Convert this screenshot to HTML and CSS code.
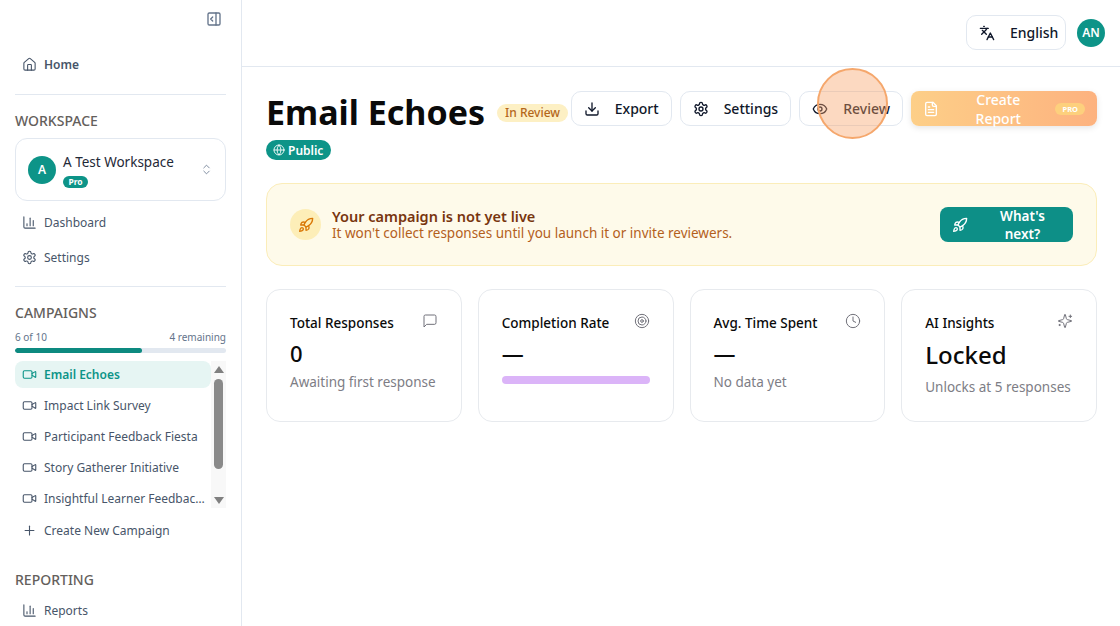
FILE: index.html
```html
<!DOCTYPE html>
<html lang="en">
<head>
    <meta charset="UTF-8">
    <meta name="viewport" content="width=device-width, initial-scale=1.0">
    <title>Email Echoes</title>
    <link rel="stylesheet" href="styles.css">
</head>
<body>

<svg class="icon-defs" aria-hidden="true">
    <symbol id="i-panel" viewBox="0 0 24 24"><rect width="18" height="18" x="3" y="3" rx="2"/><path d="M15 3v18"/><path d="m10 15-3-3 3-3"/></symbol>
    <symbol id="i-home" viewBox="0 0 24 24"><path d="M15 21v-8a1 1 0 0 0-1-1h-4a1 1 0 0 0-1 1v8"/><path d="M3 10a2 2 0 0 1 .709-1.528l7-5.999a2 2 0 0 1 2.582 0l7 5.999A2 2 0 0 1 21 10v9a2 2 0 0 1-2 2H5a2 2 0 0 1-2-2z"/></symbol>
    <symbol id="i-chart" viewBox="0 0 24 24"><path d="M3 3v16a2 2 0 0 0 2 2h16"/><path d="M18 17V9"/><path d="M13 17V5"/><path d="M8 17v-3"/></symbol>
    <symbol id="i-gear" viewBox="0 0 24 24"><path d="M12.22 2h-.44a2 2 0 0 0-2 2v.18a2 2 0 0 1-1 1.73l-.43.25a2 2 0 0 1-2 0l-.15-.08a2 2 0 0 0-2.73.73l-.22.38a2 2 0 0 0 .73 2.73l.15.1a2 2 0 0 1 1 1.72v.51a2 2 0 0 1-1 1.74l-.15.09a2 2 0 0 0-.73 2.73l.22.38a2 2 0 0 0 2.73.73l.15-.08a2 2 0 0 1 2 0l.43.25a2 2 0 0 1 1 1.73V20a2 2 0 0 0 2 2h.44a2 2 0 0 0 2-2v-.18a2 2 0 0 1 1-1.73l.43-.25a2 2 0 0 1 2 0l.15.08a2 2 0 0 0 2.73-.73l.22-.39a2 2 0 0 0-.73-2.73l-.15-.08a2 2 0 0 1-1-1.74v-.5a2 2 0 0 1 1-1.74l.15-.09a2 2 0 0 0 .73-2.73l-.22-.38a2 2 0 0 0-2.73-.73l-.15.08a2 2 0 0 1-2 0l-.43-.25a2 2 0 0 1-1-1.73V4a2 2 0 0 0-2-2z"/><circle cx="12" cy="12" r="3"/></symbol>
    <symbol id="i-video" viewBox="0 0 24 24"><path d="m16 13 5.223 3.482a.5.5 0 0 0 .777-.416V7.87a.5.5 0 0 0-.752-.432L16 10.5"/><rect x="2" y="6" width="14" height="12" rx="2"/></symbol>
    <symbol id="i-updown" viewBox="0 0 24 24"><path d="m7 15 5 5 5-5"/><path d="m7 9 5-5 5 5"/></symbol>
    <symbol id="i-plus" viewBox="0 0 24 24"><path d="M5 12h14"/><path d="M12 5v14"/></symbol>
    <symbol id="i-download" viewBox="0 0 24 24"><path d="M21 15v4a2 2 0 0 1-2 2H5a2 2 0 0 1-2-2v-4"/><polyline points="7 10 12 15 17 10"/><line x1="12" x2="12" y1="15" y2="3"/></symbol>
    <symbol id="i-eye" viewBox="0 0 24 24"><path d="M2.062 12.348a1 1 0 0 1 0-.696 10.75 10.75 0 0 1 19.876 0 1 1 0 0 1 0 .696 10.75 10.75 0 0 1-19.876 0"/><circle cx="12" cy="12" r="3"/></symbol>
    <symbol id="i-file" viewBox="0 0 24 24"><path d="M15 2H6a2 2 0 0 0-2 2v16a2 2 0 0 0 2 2h12a2 2 0 0 0 2-2V7Z"/><path d="M14 2v4a2 2 0 0 0 2 2h4"/><path d="M10 9H8"/><path d="M16 13H8"/><path d="M16 17H8"/></symbol>
    <symbol id="i-lang" viewBox="0 0 24 24"><path d="m5 8 6 6"/><path d="m4 14 6-6 2-3"/><path d="M2 5h12"/><path d="M7 2h1"/><path d="m22 22-5-10-5 10"/><path d="M14 18h6"/></symbol>
    <symbol id="i-globe" viewBox="0 0 24 24"><circle cx="12" cy="12" r="10"/><path d="M12 2a14.5 14.5 0 0 0 0 20 14.5 14.5 0 0 0 0-20"/><path d="M2 12h20"/></symbol>
    <symbol id="i-rocket" viewBox="0 0 24 24"><path d="M4.5 16.5c-1.5 1.26-2 5-2 5s3.74-.5 5-2c.71-.84.7-2.13-.09-2.91a2.18 2.18 0 0 0-2.91-.09z"/><path d="m12 15-3-3a22 22 0 0 1 2-3.95A12.88 12.88 0 0 1 22 2c0 2.72-.78 7.5-6 11a22.35 22.35 0 0 1-4 2z"/><path d="M9 12H4s.55-3.03 2-4c1.62-1.08 5 0 5 0"/><path d="M12 15v5s3.03-.55 4-2c1.08-1.62 0-5 0-5"/></symbol>
    <symbol id="i-message" viewBox="0 0 24 24"><path d="M21 15a2 2 0 0 1-2 2H7l-4 4V5a2 2 0 0 1 2-2h14a2 2 0 0 1 2 2z"/></symbol>
    <symbol id="i-target" viewBox="0 0 24 24"><circle cx="12" cy="12" r="10"/><circle cx="12" cy="12" r="6"/><circle cx="12" cy="12" r="2"/></symbol>
    <symbol id="i-clock" viewBox="0 0 24 24"><circle cx="12" cy="12" r="10"/><polyline points="12 6 12 12 16 14"/></symbol>
    <symbol id="i-sparkles" viewBox="0 0 24 24"><path d="M9.937 15.5A2 2 0 0 0 8.5 14.063l-6.135-1.582a.5.5 0 0 1 0-.962L8.5 9.936A2 2 0 0 0 9.937 8.5l1.582-6.135a.5.5 0 0 1 .963 0L14.063 8.5A2 2 0 0 0 15.5 9.937l6.135 1.581a.5.5 0 0 1 0 .964L15.5 14.063a2 2 0 0 0-1.437 1.437l-1.582 6.135a.5.5 0 0 1-.963 0z"/><path d="M20 3v4"/><path d="M22 5h-4"/><path d="M4 17v2"/><path d="M5 18H3"/></symbol>
</svg>

<div class="app">
    <aside class="sidebar">
        <div class="collapse-row">
            <svg class="icon collapse-icon"><use href="#i-panel"/></svg>
        </div>

        <a class="nav-item nav-home"><svg class="icon"><use href="#i-home"/></svg><span>Home</span></a>
        <hr class="divider divider-home">

        <h3 class="section-title">WORKSPACE</h3>
        <div class="workspace-card">
            <div class="workspace-avatar">A</div>
            <div class="workspace-info">
                <div class="workspace-name">A Test Workspace</div>
                <span class="pro-pill">Pro</span>
            </div>
            <svg class="icon updown-icon"><use href="#i-updown"/></svg>
        </div>
        <div class="workspace-links">
            <a class="nav-item"><svg class="icon"><use href="#i-chart"/></svg><span>Dashboard</span></a>
            <a class="nav-item"><svg class="icon"><use href="#i-gear"/></svg><span>Settings</span></a>
        </div>
        <hr class="divider divider-workspace">

        <h3 class="section-title">CAMPAIGNS</h3>
        <div class="usage-row"><span>6 of 10</span><span>4 remaining</span></div>
        <div class="usage-track"><div class="usage-fill" style="width: 60%"></div></div>

        <div class="campaign-scroll">
            <ul class="campaign-list">
                <li class="nav-item campaign-item active"><svg class="icon"><use href="#i-video"/></svg><span>Email Echoes</span></li>
                <li class="nav-item campaign-item"><svg class="icon"><use href="#i-video"/></svg><span>Impact Link Survey</span></li>
                <li class="nav-item campaign-item"><svg class="icon"><use href="#i-video"/></svg><span>Participant Feedback Fiesta</span></li>
                <li class="nav-item campaign-item"><svg class="icon"><use href="#i-video"/></svg><span>Story Gatherer Initiative</span></li>
                <li class="nav-item campaign-item"><svg class="icon"><use href="#i-video"/></svg><span class="truncate">Insightful Learner Feedback Loop</span></li>
            </ul>
            <div class="scrollbar">
                <div class="arrow-up"></div>
                <div class="scroll-thumb"></div>
                <div class="arrow-down"></div>
            </div>
        </div>
        <a class="nav-item campaign-item create-item"><svg class="icon"><use href="#i-plus"/></svg><span>Create New Campaign</span></a>

        <h3 class="section-title reporting-title">REPORTING</h3>
        <a class="nav-item campaign-item"><svg class="icon"><use href="#i-chart"/></svg><span>Reports</span></a>
    </aside>

    <div class="main">
        <header class="topbar">
            <button class="btn lang-btn"><svg class="icon btn-icon"><use href="#i-lang"/></svg>English</button>
            <div class="user-avatar">AN</div>
        </header>

        <main class="content">
            <div class="page-head">
                <div class="page-title-wrap">
                    <div class="title-row">
                        <h1>Email Echoes</h1>
                        <span class="status-badge">In Review</span>
                    </div>
                    <span class="public-badge"><svg class="icon"><use href="#i-globe"/></svg>Public</span>
                </div>
                <div class="actions">
                    <button class="btn export-btn"><svg class="icon btn-icon"><use href="#i-download"/></svg>Export</button>
                    <button class="btn settings-btn"><svg class="icon btn-icon"><use href="#i-gear"/></svg>Settings</button>
                    <button class="btn review-btn"><svg class="icon btn-icon"><use href="#i-eye"/></svg>Review</button>
                    <button class="btn report-btn"><svg class="icon btn-icon"><use href="#i-file"/></svg>Create Report<span class="report-pro">PRO</span></button>
                </div>
            </div>

            <section class="notice">
                <div class="notice-icon"><svg class="icon"><use href="#i-rocket"/></svg></div>
                <div class="notice-text">
                    <div class="notice-title">Your campaign is not yet live</div>
                    <div class="notice-sub">It won't collect responses until you launch it or invite reviewers.</div>
                </div>
                <button class="next-btn"><svg class="icon"><use href="#i-rocket"/></svg>What's next?</button>
            </section>

            <section class="stats">
                <div class="stat-card">
                    <div class="stat-head"><span>Total Responses</span><svg class="icon"><use href="#i-message"/></svg></div>
                    <div class="stat-value">0</div>
                    <div class="stat-note">Awaiting first response</div>
                </div>
                <div class="stat-card">
                    <div class="stat-head"><span>Completion Rate</span><svg class="icon"><use href="#i-target"/></svg></div>
                    <div class="stat-value">—</div>
                    <div class="stat-bar"></div>
                </div>
                <div class="stat-card">
                    <div class="stat-head"><span>Avg. Time Spent</span><svg class="icon"><use href="#i-clock"/></svg></div>
                    <div class="stat-value">—</div>
                    <div class="stat-note">No data yet</div>
                </div>
                <div class="stat-card">
                    <div class="stat-head"><span>AI Insights</span><svg class="icon"><use href="#i-sparkles"/></svg></div>
                    <div class="stat-value stat-locked">Locked</div>
                    <div class="stat-note">Unlocks at 5 responses</div>
                </div>
            </section>
        </main>
    </div>
</div>

<div class="click-highlight"></div>

</body>
</html>
```

FILE: styles.css
```css
* {
    box-sizing: border-box;
}

html, body {
    margin: 0;
    height: 626px;
    overflow: hidden;
}

body {
    font-family: "Noto Sans", "Open Sans", sans-serif;
    background-color: white;
    color: #0a0a0a;
}

.icon-defs {
    display: none;
}

.icon {
    width: 16px;
    height: 16px;
    flex-shrink: 0;
    fill: none;
    stroke: currentColor;
    stroke-width: 2;
    stroke-linecap: round;
    stroke-linejoin: round;
}

.app {
    display: flex;
    height: 626px;
}

/* sidebar */
.sidebar {
    width: 242px;
    flex-shrink: 0;
    padding: 0 15px;
    border-right: 1px solid #e2e8f0;
    overflow: hidden;
}

.collapse-row {
    display: flex;
    justify-content: flex-end;
    height: 47px;
    padding: 11px 4px 0 0;
}

.collapse-icon {
    color: #64748b;
}

.nav-item {
    display: flex;
    align-items: center;
    gap: 7px;
    height: 35px;
    padding-left: 7px;
    font-size: 12px;
    color: #475569;
}

.nav-item .icon {
    width: 15px;
    height: 15px;
    stroke-width: 1.75;
}

.nav-home {
    height: 34px;
    font-weight: 600;
}

.divider {
    border: none;
    border-top: 1px solid #e2e8f0;
    margin: 0;
}

.divider-home {
    margin-top: 13px;
}

.section-title {
    margin: 0;
    font-size: 14px;
    line-height: 20px;
    font-weight: 500;
    color: #64605c;
}

.divider-home + .section-title {
    margin-top: 16px;
}

.workspace-card {
    display: flex;
    align-items: center;
    height: 63px;
    margin-top: 7px;
    padding: 0 12px;
    border: 1px solid #e2e8f0;
    border-radius: 12px;
}

.workspace-avatar, .user-avatar {
    display: flex;
    align-items: center;
    justify-content: center;
    border-radius: 50%;
    background-color: #0d9488;
    color: white;
    font-weight: 600;
}

.workspace-avatar {
    width: 28px;
    height: 28px;
    font-size: 12px;
}

.workspace-info {
    flex: 1;
    margin-left: 7px;
}

.workspace-name {
    font-size: 13.5px;
    line-height: 20px;
    color: #1f2937;
}

.pro-pill {
    display: block;
    width: 25px;
    height: 12px;
    margin-top: 4px;
    border-radius: 6px;
    background-color: #0d9488;
    color: white;
    font-size: 8.5px;
    line-height: 12px;
    font-weight: 700;
    text-align: center;
}

.updown-icon {
    width: 13px;
    height: 13px;
    stroke-width: 1.5;
    color: #64748b;
}

.workspace-links {
    margin-top: 4px;
}

.divider-workspace {
    margin-top: 11px;
}

.divider-workspace + .section-title {
    margin-top: 16px;
}

.usage-row {
    display: flex;
    justify-content: space-between;
    margin-top: 7px;
    font-size: 10px;
    line-height: 14px;
    color: #64748b;
}

.usage-track {
    height: 5px;
    margin-top: 4px;
    border-radius: 3px;
    background-color: #e2e8f0;
    overflow: hidden;
}

.usage-fill {
    height: 100%;
    border-radius: 3px;
    background-color: #0d8a80;
}

.campaign-scroll {
    display: flex;
    height: 147px;
    margin-top: 8px;
}

.campaign-list {
    flex: 1;
    min-width: 0;
    margin: 0;
    padding: 0;
    list-style: none;
}

.campaign-item {
    height: 27px;
    margin-bottom: 4px;
}

.campaign-item .truncate {
    overflow: hidden;
    white-space: nowrap;
    text-overflow: ellipsis;
}

.campaign-item span {
    min-width: 0;
}

.campaign-item.active {
    background-color: #e6f5f3;
    border-radius: 8px;
    color: #0d9488;
    font-weight: 600;
}

.scrollbar {
    display: flex;
    flex-direction: column;
    align-items: center;
    width: 15px;
    flex-shrink: 0;
    background-color: #f8f8f8;
}

.arrow-up, .arrow-down {
    width: 0;
    height: 0;
    border-left: 5px solid transparent;
    border-right: 5px solid transparent;
}

.arrow-up {
    margin-top: 5px;
    border-bottom: 7px solid #808080;
}

.arrow-down {
    margin-top: 28px;
    border-top: 7px solid #808080;
}

.scroll-thumb {
    width: 9px;
    height: 90px;
    margin-top: 6px;
    border-radius: 5px;
    background-color: #8a8a8a;
}

.create-item {
    margin-top: 9px;
    margin-bottom: 0;
}

.reporting-title {
    margin-top: 26px;
    margin-bottom: 7px;
}

/* top bar */
.main {
    flex: 1;
    min-width: 0;
}

.topbar {
    display: flex;
    align-items: center;
    justify-content: flex-end;
    gap: 11px;
    height: 67px;
    padding: 0 15px 1px 0;
    border-bottom: 1px solid #e2e8f0;
}

.btn {
    display: flex;
    align-items: center;
    height: 35px;
    padding: 0 12px;
    border: 1px solid #e2e8f0;
    border-radius: 10px;
    background-color: white;
    color: #0f172a;
    font-family: inherit;
    font-size: 14px;
    font-weight: 500;
}

.btn-icon {
    margin-right: 15px;
}

.lang-btn {
    width: 100px;
}

.user-avatar {
    width: 28px;
    height: 28px;
    font-size: 12px;
}

/* page head */
.content {
    padding: 23px 23px 0 24px;
}

.page-head {
    display: flex;
    justify-content: space-between;
    height: 93px;
}

.title-row {
    display: flex;
    align-items: center;
    gap: 12px;
}

h1 {
    margin: 0;
    font-size: 34px;
    line-height: 44px;
    font-weight: 700;
    color: #0a0a0a;
}

.status-badge {
    margin-top: 2px;
    padding: 0 8px;
    height: 18px;
    border-radius: 9px;
    background-color: #fdf0c4;
    color: #b4671a;
    font-size: 12px;
    line-height: 18px;
    font-weight: 500;
}

.public-badge {
    display: inline-flex;
    align-items: center;
    gap: 3px;
    height: 20px;
    margin-top: 6px;
    padding: 0 8px 0 7px;
    border-radius: 10px;
    background-color: #0d9488;
    color: white;
    font-size: 12px;
    font-weight: 600;
}

.public-badge .icon {
    width: 12px;
    height: 12px;
    stroke-width: 1.75;
}

.actions {
    display: flex;
    gap: 8px;
    height: 35px;
    margin-top: 1px;
}

.report-btn {
    position: relative;
    width: 186px;
    border: none;
    border-radius: 8px;
    background: linear-gradient(90deg, #fdcf88, #fdb27f);
    color: white;
    box-shadow: 0 2px 6px rgba(0, 0, 0, 0.1);
}

.report-pro {
    margin-left: 13px;
    padding: 0 7px;
    height: 12px;
    border-radius: 6px;
    background-color: #fdd07d;
    font-size: 7.5px;
    line-height: 12px;
    font-weight: 700;
}

/* banner */
.notice {
    display: flex;
    align-items: center;
    height: 83px;
    padding: 0 23px;
    border: 1px solid #fbedb9;
    border-radius: 16px;
    background-color: #fefaea;
}

.notice-icon {
    display: flex;
    align-items: center;
    justify-content: center;
    width: 31px;
    height: 31px;
    border-radius: 50%;
    background-color: #fdeeb8;
    color: #d97706;
}

.notice-text {
    flex: 1;
    margin-left: 11px;
}

.notice-title {
    font-size: 14.5px;
    line-height: 18px;
    font-weight: 600;
    color: #78350f;
}

.notice-sub {
    font-size: 13.5px;
    line-height: 17px;
    color: #b45f1c;
}

.next-btn {
    display: flex;
    align-items: center;
    gap: 16px;
    width: 133px;
    height: 35px;
    padding: 0 12px;
    border: none;
    border-radius: 8px;
    background-color: #0d8f87;
    color: white;
    font-family: inherit;
    font-size: 13.5px;
    font-weight: 600;
}

/* stat cards */
.stats {
    display: grid;
    grid-template-columns: repeat(4, 1fr);
    gap: 16px;
    margin-top: 23px;
}

.stat-card {
    height: 133px;
    padding: 23px 23px 0;
    border: 1px solid #e7eaee;
    border-radius: 14px;
}

.stat-head {
    display: flex;
    align-items: flex-start;
    justify-content: space-between;
    font-size: 13.5px;
    line-height: 20px;
    font-weight: 500;
    color: #0a0a0a;
}

.stat-head .icon {
    color: #71717a;
    stroke-width: 1.5;
}

.stat-value {
    margin-top: 4px;
    font-size: 22px;
    line-height: 32px;
    font-weight: 500;
}

.stat-locked {
    font-size: 24px;
    line-height: 36px;
}

.stat-note {
    margin-top: 3px;
    font-size: 13.5px;
    line-height: 20px;
    color: #7d7d85;
}

.stat-locked + .stat-note {
    margin-top: 4px;
}

.stat-bar {
    height: 8px;
    margin-top: 7px;
    border-radius: 4px;
    background-color: #dbb4f8;
}

/* click marker from the recording */
.click-highlight {
    position: absolute;
    left: 817px;
    top: 68px;
    width: 71px;
    height: 71px;
    border: 2px solid #f5a76c;
    border-radius: 50%;
    background-color: rgba(247, 160, 100, 0.4);
}
```
